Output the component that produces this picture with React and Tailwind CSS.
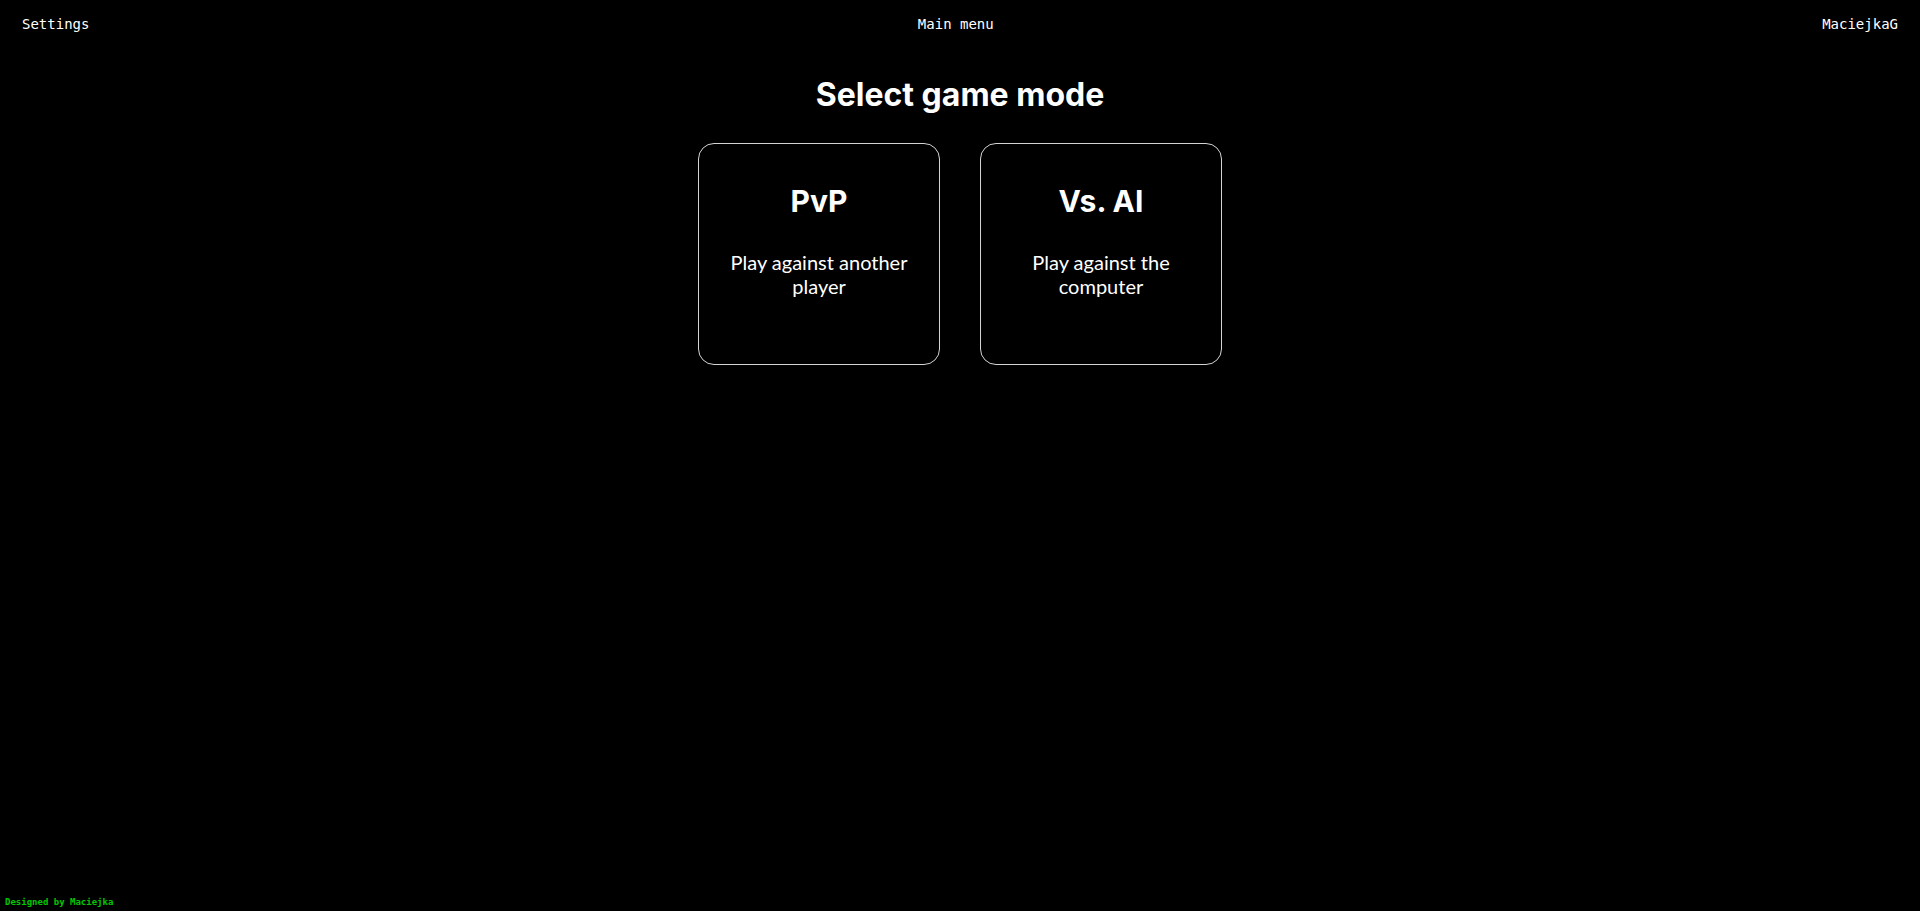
import React from 'react';

const modes = [
  { id: 'pvp', title: 'PvP', desc: 'Play against another player' },
  { id: 'ai', title: 'Vs. AI', desc: 'Play against the computer' }
];

const mono = { fontFamily: '"DejaVu Sans Mono", "Liberation Mono", monospace' };

export default function App() {
  return (
    <div className="min-h-screen bg-black text-white flex flex-col">
      <header
        className="flex justify-between items-center px-[22px] pt-[14px] text-[14px] leading-5"
        style={mono}
      >
        <span>Settings</span>
        <span>Main menu</span>
        <span>MaciejkaG</span>
      </header>

      <main className="flex flex-col items-center">
        <h1 className="mt-[41px] text-[32px] leading-[40px] font-bold font-['Inter',sans-serif]">
          Select game mode
        </h1>
        <div className="flex gap-10 mt-[28px]">
          {modes.map((m) => (
            <button
              key={m.id}
              className="w-[242px] h-[222px] border border-[#d4d4d4] rounded-2xl flex flex-col items-center pt-[36px] px-6 text-center"
            >
              <span className="text-[30px] leading-[42px] font-bold font-['Inter',sans-serif]">{m.title}</span>
              <span className="mt-[28px] text-[20px] leading-6 font-['Lato',sans-serif]">{m.desc}</span>
            </button>
          ))}
        </div>
      </main>

      <footer className="mt-auto px-[5px] pb-[3px] text-[9px] leading-3 font-bold text-[#00c800]" style={mono}>
        Designed by Maciejka
      </footer>
    </div>
  );
}
